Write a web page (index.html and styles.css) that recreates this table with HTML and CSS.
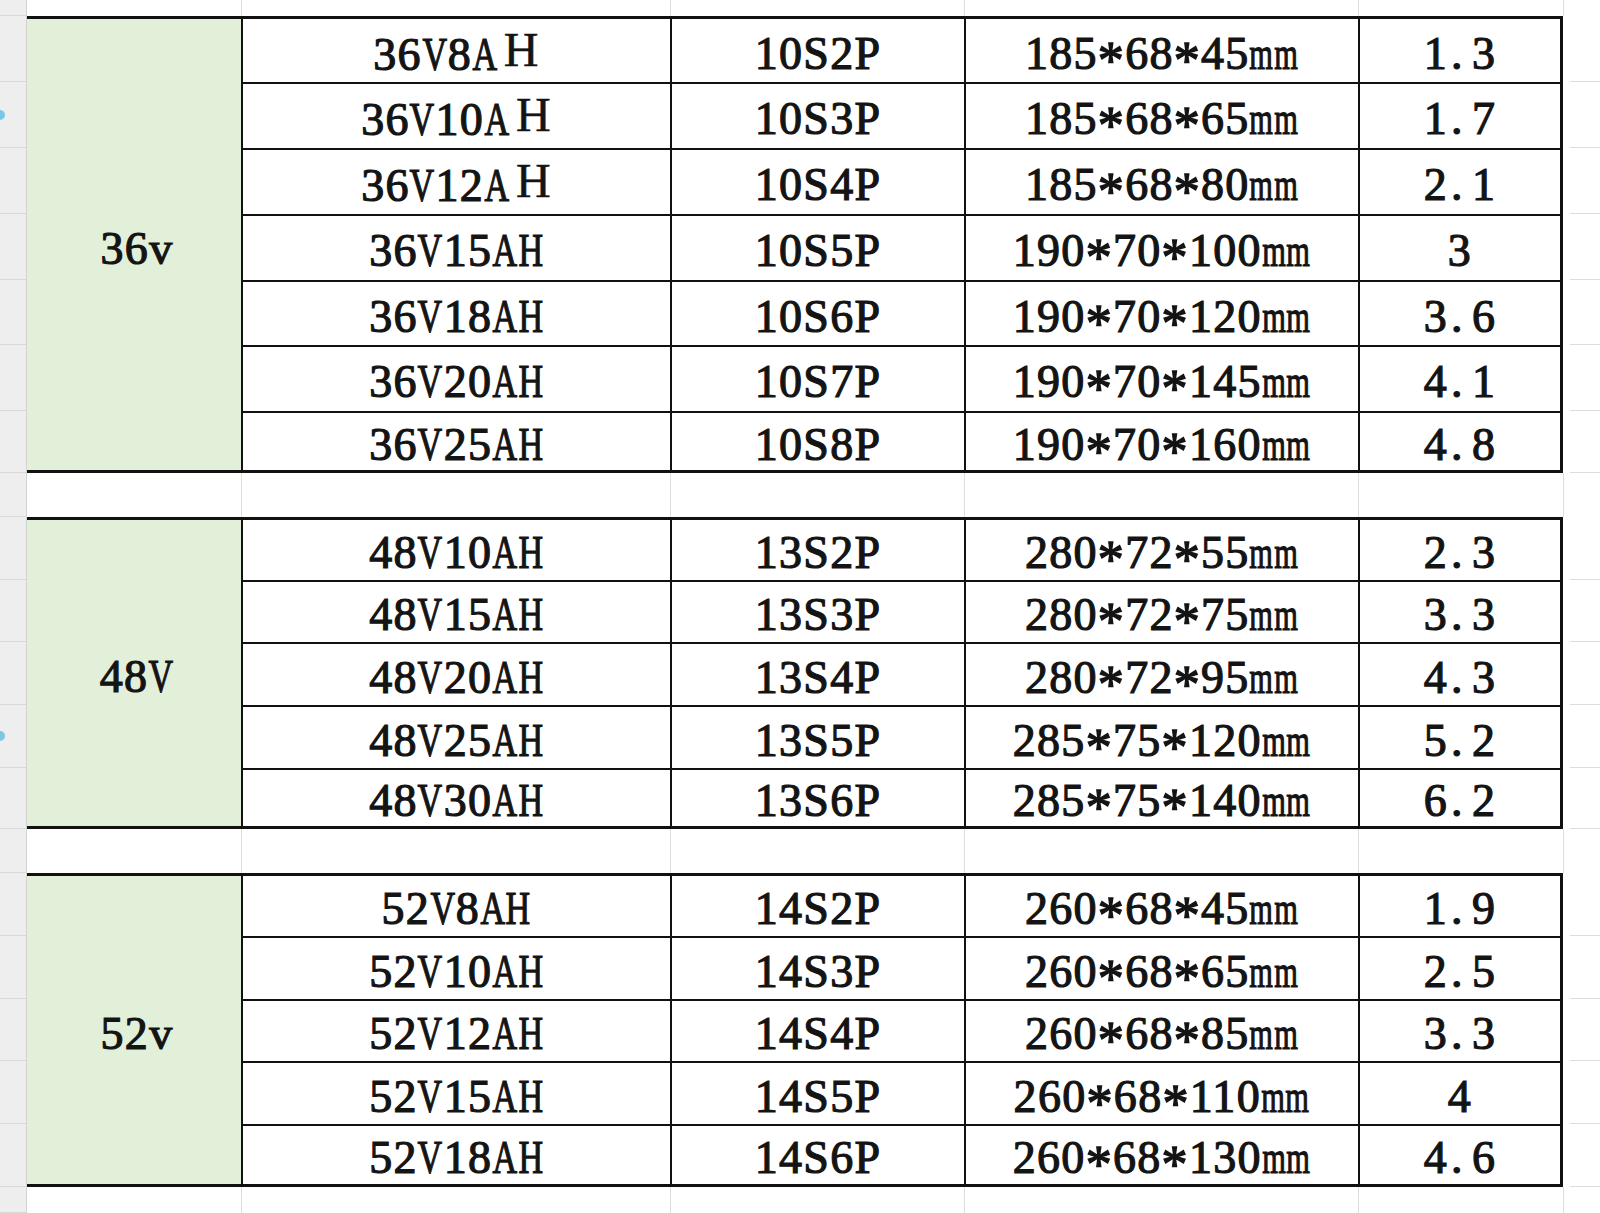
FILE: index.html
```html
<!DOCTYPE html>
<html lang="zh">
<head>
<meta charset="utf-8">
<title>电池规格表</title>
<link rel="stylesheet" href="styles.css">
</head>
<body>
<div class="sheet">
  <div class="band band-top">
    <div class="gut"></div><div class="gl"></div><div class="gl"></div><div class="gl"></div><div class="gl"></div><div class="gl"></div><div class="gl"></div>
  </div>

  <div class="band tbl t36">
    <div class="gut"></div><div class="grp"><span class="tx">36v</span></div><div class="c first"><span class="tx">36<span class="n">V</span>8<span class="n">A</span><span class="hb">H</span></span></div><div class="c first"><span class="tx">10S2P</span></div><div class="c first"><span class="tx">185<span class="s">*</span>68<span class="s">*</span>45<span class="m">m</span><span class="m">m</span></span></div><div class="c first w"><span class="tx">1<span class="p">.</span>3</span></div><div class="tail"></div>
    <div class="gut"><span class="dot"></span></div><div class="c"><span class="tx">36<span class="n">V</span>10<span class="n">A</span><span class="hb">H</span></span></div><div class="c"><span class="tx">10S3P</span></div><div class="c"><span class="tx">185<span class="s">*</span>68<span class="s">*</span>65<span class="m">m</span><span class="m">m</span></span></div><div class="c w"><span class="tx">1<span class="p">.</span>7</span></div><div class="tail"></div>
    <div class="gut"></div><div class="c"><span class="tx">36<span class="n">V</span>12<span class="n">A</span><span class="hb">H</span></span></div><div class="c"><span class="tx">10S4P</span></div><div class="c"><span class="tx">185<span class="s">*</span>68<span class="s">*</span>80<span class="m">m</span><span class="m">m</span></span></div><div class="c w"><span class="tx">2<span class="p">.</span>1</span></div><div class="tail"></div>
    <div class="gut"></div><div class="c"><span class="tx">36<span class="n">V</span>15<span class="n">A</span><span class="n">H</span></span></div><div class="c"><span class="tx">10S5P</span></div><div class="c"><span class="tx">190<span class="s">*</span>70<span class="s">*</span>100<span class="m">m</span><span class="m">m</span></span></div><div class="c w"><span class="tx">3</span></div><div class="tail"></div>
    <div class="gut"></div><div class="c"><span class="tx">36<span class="n">V</span>18<span class="n">A</span><span class="n">H</span></span></div><div class="c"><span class="tx">10S6P</span></div><div class="c"><span class="tx">190<span class="s">*</span>70<span class="s">*</span>120<span class="m">m</span><span class="m">m</span></span></div><div class="c w"><span class="tx">3<span class="p">.</span>6</span></div><div class="tail"></div>
    <div class="gut"></div><div class="c"><span class="tx">36<span class="n">V</span>20<span class="n">A</span><span class="n">H</span></span></div><div class="c"><span class="tx">10S7P</span></div><div class="c"><span class="tx">190<span class="s">*</span>70<span class="s">*</span>145<span class="m">m</span><span class="m">m</span></span></div><div class="c w"><span class="tx">4<span class="p">.</span>1</span></div><div class="tail"></div>
    <div class="gut"></div><div class="c last"><span class="tx">36<span class="n">V</span>25<span class="n">A</span><span class="n">H</span></span></div><div class="c last"><span class="tx">10S8P</span></div><div class="c last"><span class="tx">190<span class="s">*</span>70<span class="s">*</span>160<span class="m">m</span><span class="m">m</span></span></div><div class="c last w"><span class="tx">4<span class="p">.</span>8</span></div><div class="tail"></div>
  </div>

  <div class="band band-gap">
    <div class="gut"></div><div class="gl"></div><div class="gl"></div><div class="gl"></div><div class="gl"></div><div class="gl"></div><div class="gl"></div>
  </div>

  <div class="band tbl t48">
    <div class="gut"></div><div class="grp grp5"><span class="tx">48<span class="n">V</span></span></div><div class="c first"><span class="tx">48<span class="n">V</span>10<span class="n">A</span><span class="n">H</span></span></div><div class="c first"><span class="tx">13S2P</span></div><div class="c first"><span class="tx">280<span class="s">*</span>72<span class="s">*</span>55<span class="m">m</span><span class="m">m</span></span></div><div class="c first w"><span class="tx">2<span class="p">.</span>3</span></div><div class="tail"></div>
    <div class="gut"></div><div class="c"><span class="tx">48<span class="n">V</span>15<span class="n">A</span><span class="n">H</span></span></div><div class="c"><span class="tx">13S3P</span></div><div class="c"><span class="tx">280<span class="s">*</span>72<span class="s">*</span>75<span class="m">m</span><span class="m">m</span></span></div><div class="c w"><span class="tx">3<span class="p">.</span>3</span></div><div class="tail"></div>
    <div class="gut"></div><div class="c"><span class="tx">48<span class="n">V</span>20<span class="n">A</span><span class="n">H</span></span></div><div class="c"><span class="tx">13S4P</span></div><div class="c"><span class="tx">280<span class="s">*</span>72<span class="s">*</span>95<span class="m">m</span><span class="m">m</span></span></div><div class="c w"><span class="tx">4<span class="p">.</span>3</span></div><div class="tail"></div>
    <div class="gut"><span class="dot"></span></div><div class="c"><span class="tx">48<span class="n">V</span>25<span class="n">A</span><span class="n">H</span></span></div><div class="c"><span class="tx">13S5P</span></div><div class="c"><span class="tx">285<span class="s">*</span>75<span class="s">*</span>120<span class="m">m</span><span class="m">m</span></span></div><div class="c w"><span class="tx">5<span class="p">.</span>2</span></div><div class="tail"></div>
    <div class="gut"></div><div class="c last"><span class="tx">48<span class="n">V</span>30<span class="n">A</span><span class="n">H</span></span></div><div class="c last"><span class="tx">13S6P</span></div><div class="c last"><span class="tx">285<span class="s">*</span>75<span class="s">*</span>140<span class="m">m</span><span class="m">m</span></span></div><div class="c last w"><span class="tx">6<span class="p">.</span>2</span></div><div class="tail"></div>
  </div>

  <div class="band band-gap">
    <div class="gut"></div><div class="gl"></div><div class="gl"></div><div class="gl"></div><div class="gl"></div><div class="gl"></div><div class="gl"></div>
  </div>

  <div class="band tbl t52">
    <div class="gut"></div><div class="grp grp5"><span class="tx">52v</span></div><div class="c first"><span class="tx">52<span class="n">V</span>8<span class="n">A</span><span class="n">H</span></span></div><div class="c first"><span class="tx">14S2P</span></div><div class="c first"><span class="tx">260<span class="s">*</span>68<span class="s">*</span>45<span class="m">m</span><span class="m">m</span></span></div><div class="c first w"><span class="tx">1<span class="p">.</span>9</span></div><div class="tail"></div>
    <div class="gut"></div><div class="c"><span class="tx">52<span class="n">V</span>10<span class="n">A</span><span class="n">H</span></span></div><div class="c"><span class="tx">14S3P</span></div><div class="c"><span class="tx">260<span class="s">*</span>68<span class="s">*</span>65<span class="m">m</span><span class="m">m</span></span></div><div class="c w"><span class="tx">2<span class="p">.</span>5</span></div><div class="tail"></div>
    <div class="gut"></div><div class="c"><span class="tx">52<span class="n">V</span>12<span class="n">A</span><span class="n">H</span></span></div><div class="c"><span class="tx">14S4P</span></div><div class="c"><span class="tx">260<span class="s">*</span>68<span class="s">*</span>85<span class="m">m</span><span class="m">m</span></span></div><div class="c w"><span class="tx">3<span class="p">.</span>3</span></div><div class="tail"></div>
    <div class="gut"></div><div class="c"><span class="tx">52<span class="n">V</span>15<span class="n">A</span><span class="n">H</span></span></div><div class="c"><span class="tx">14S5P</span></div><div class="c"><span class="tx">260<span class="s">*</span>68<span class="s">*</span>110<span class="m">m</span><span class="m">m</span></span></div><div class="c w"><span class="tx">4</span></div><div class="tail"></div>
    <div class="gut"></div><div class="c last"><span class="tx">52<span class="n">V</span>18<span class="n">A</span><span class="n">H</span></span></div><div class="c last"><span class="tx">14S6P</span></div><div class="c last"><span class="tx">260<span class="s">*</span>68<span class="s">*</span>130<span class="m">m</span><span class="m">m</span></span></div><div class="c last w"><span class="tx">4<span class="p">.</span>6</span></div><div class="tail"></div>
  </div>

  <div class="band band-bottom">
    <div class="gut"></div><div class="gl"></div><div class="gl"></div><div class="gl"></div><div class="gl"></div><div class="gl"></div><div class="gl"></div>
  </div>
</div>
</body>
</html>
```

FILE: styles.css
```css
* { box-sizing: border-box; }

html, body {
  margin: 0;
  padding: 0;
  background: #ffffff;
}

.sheet {
  width: 1600px;
  height: 1213px;
  overflow: hidden;
  display: flex;
  flex-direction: column;
  font-family: "Liberation Serif", "Times New Roman", serif;
  font-weight: 400;
  font-size: 46px;
  color: #141414;
}

.band {
  display: grid;
  grid-template-columns: 27px 214px 429px 294px 394px 205px 37px;
}

.band-top { grid-template-rows: 16px; }
.band-gap { grid-template-rows: 44px; }
.band-bottom { grid-template-rows: 26px; }

.t36 { grid-template-rows: 66px 66px 66px 66px 65px 66px 62px; }
.t48 { grid-template-rows: 63px 62px 63px 63px 61px; }
.t52 { grid-template-rows: 63px 63px 62px 63px 63px; }

/* row header gutter */
.gut {
  position: relative;
  background: #eeeeee;
  border-right: 1px solid #d2d2d2;
  border-bottom: 1px solid #d8d8d8;
}

.dot {
  position: absolute;
  left: -5px;
  top: 50%;
  width: 10px;
  height: 10px;
  margin-top: -5px;
  border-radius: 50%;
  background: #7cc6e6;
}

/* light gridlines in empty rows */
.gl {
  border-left: 1px solid #dedede;
}
.band .gut + .gl {
  border-left: none;
}

.tail {
  margin-left: 7px;
  border-bottom: 1px solid #dddddd;
}

/* table cells */
.grp {
  grid-row: span 7;
  background: #e2efd9;
  border-top: 3px solid #111;
  border-bottom: 3px solid #111;
  display: flex;
  align-items: center;
  justify-content: center;
  padding-top: 8px;
  padding-left: 6px;
}
.grp5 { grid-row: span 5; }

.c {
  display: flex;
  align-items: center;
  justify-content: center;
  background: #ffffff;
  border-left: 2px solid #111;
  border-top: 2px solid #111;
  padding-top: 6px;
}
.c.first { border-top-width: 3px; }
.c.last { border-bottom: 3px solid #111; }
.c.w { border-right: 3px solid #111; }

.tx {
  display: inline-block;
  white-space: pre;
  line-height: 1;
  letter-spacing: 1.3px;
  -webkit-text-stroke: 1.2px #141414;
}

/* half-width style capitals */
.n {
  display: inline-block;
  transform: scaleX(0.74);
  margin: 0 -4.4px;
}

/* half-width style "m" */
.m {
  display: inline-block;
  transform: scaleX(0.66);
  margin: 0 -6.2px;
}

/* centred asterisk */
.s {
  display: inline-block;
  font-size: 52px;
  line-height: 0;
  position: relative;
  top: 9px;
  -webkit-text-stroke: 1.4px #141414;
}

/* full-cell period */
.p {
  display: inline-block;
  width: 24px;
  text-align: left;
  padding-left: 3px;
}

.hb {
  font-size: 48px;
  margin-left: 6px;
  position: relative;
  top: -4px;
  -webkit-text-stroke: 0.5px #141414;
}
```
